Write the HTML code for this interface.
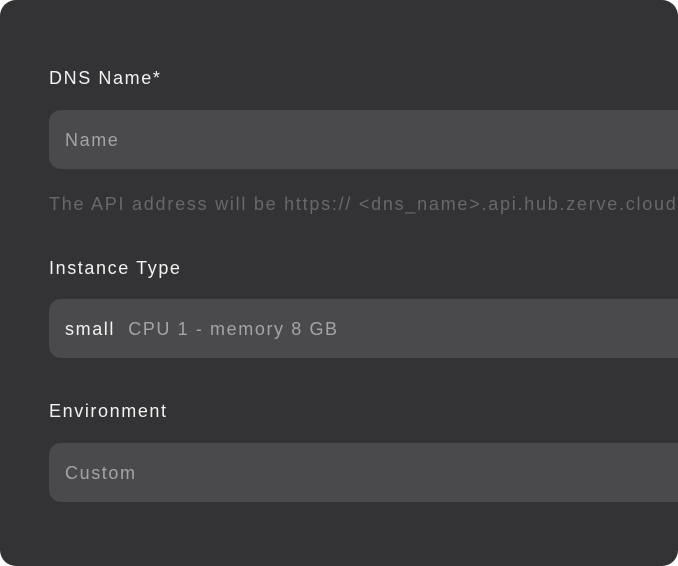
<!DOCTYPE html>
<html><head><style>
html,body{margin:0;padding:0;background:#fff;}
.card{position:absolute;left:0;top:0;width:678px;height:566px;background:#333335;border-radius:16px;overflow:hidden;font-family:"Liberation Sans",sans-serif;letter-spacing:1.6px;}
.lbl{position:absolute;left:49px;color:#f2f2f2;font-size:18px;line-height:20px;}
.inp{position:absolute;left:49px;width:660px;height:59px;background:#4a4a4c;border-radius:12px;}
.inp span{position:absolute;left:16px;top:19px;font-size:18px;line-height:22px;color:#a4a4a6;white-space:nowrap;}
.help{position:absolute;left:49px;top:193px;font-size:18px;line-height:22px;color:#68686a;white-space:nowrap;letter-spacing:1.75px;}
</style></head><body>
<div class="card">
<div class="lbl" style="top:68px">DNS Name*</div>
<div class="inp" style="top:110px"><span>Name</span></div>
<div class="help">The API address will be https:// &lt;dns_name&gt;.api.hub.zerve.cloud</div>
<div class="lbl" style="top:258px">Instance Type</div>
<div class="inp" style="top:299px"><span><b style="font-weight:normal;color:#f2f2f2">small</b>&nbsp; CPU 1 - memory 8 GB</span></div>
<div class="lbl" style="top:401px">Environment</div>
<div class="inp" style="top:443px"><span>Custom</span></div>
</div>
</body></html>
